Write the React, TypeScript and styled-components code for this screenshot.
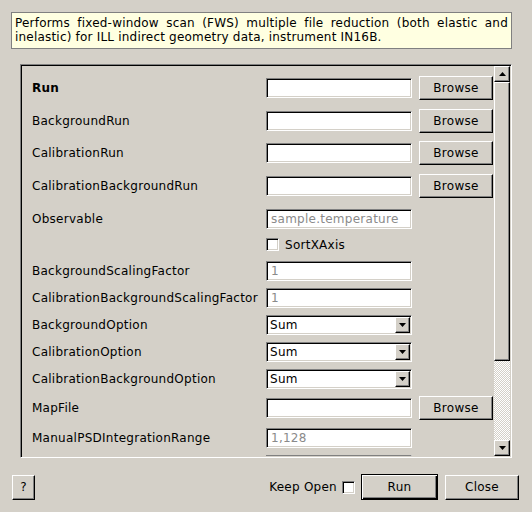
import React from 'react';
import styled, { createGlobalStyle, css } from 'styled-components';

const GlobalStyle = createGlobalStyle`
  html, body { margin: 0; padding: 0; background: #d4d0c8; }
  body {
    font-family: "DejaVu Sans", "Liberation Sans", sans-serif;
    font-size: 12px;
    color: #000;
  }
`;

const sunken = css`
  box-sizing: border-box;
  border: 1px solid;
  border-color: #808080 #ffffff #ffffff #808080;
  box-shadow: inset 1px 1px 0 #000, inset -1px -1px 0 #d4d0c8;
  background: #fff;
`;

const raised = css`
  box-sizing: border-box;
  border: 1px solid;
  border-color: #ffffff #000 #000 #ffffff;
  box-shadow: inset -1px -1px 0 #808080;
  background: #d4d0c8;
`;

const Window = styled.div`
  width: 532px;
  height: 512px;
  box-sizing: border-box;
  padding-top: 12px;
  display: flex;
  flex-direction: column;
  background: #d4d0c8;
  overflow: hidden;
`;

const Description = styled.div`
  margin-left: 11px;
  width: 501px;
  box-sizing: border-box;
  border: 1px solid #808080;
  background: #ffffe1;
  padding: 3px 3px 4px;
  line-height: 14px;
  text-align: justify;
  letter-spacing: 0.2px;
`;

const ScrollFrame = styled.div`
  margin: 15px 0 0 20px;
  width: 492px;
  height: 394px;
  box-sizing: border-box;
  border: 1px solid;
  border-color: #808080 #ffffff #ffffff #808080;
  box-shadow: inset 1px 1px 0 #000, inset -1px -1px 0 #d4d0c8;
  padding: 1px;
  display: flex;
`;

const Viewport = styled.div`
  flex: 1;
  overflow: hidden;
  padding: 9.5px 0 0 10px;
  display: flex;
  flex-direction: column;
  gap: 7px;
`;

const Row = styled.div<{ $h: number; $extra?: number }>`
  display: flex;
  align-items: center;
  gap: 7px;
  flex: none;
  height: ${(p) => p.$h}px;
  margin-top: ${(p) => p.$extra ?? 0}px;
`;

const Label = styled.div<{ $bold?: boolean }>`
  width: 227px;
  flex: none;
  white-space: nowrap;
  letter-spacing: 0.26px;
  font-weight: ${(p) => (p.$bold ? 'bold' : 'normal')};
`;

const TextField = styled.input`
  ${sunken};
  width: 146px;
  height: 20px;
  flex: none;
  margin: 0;
  padding: 0 3px 0 4px;
  font: inherit;
  letter-spacing: 0.26px;
  color: #000;
  outline: none;
  &::placeholder { color: #8a8a8a; opacity: 1; }
`;

const Combo = styled.div`
  ${sunken};
  width: 146px;
  height: 20px;
  flex: none;
  padding: 1px;
  display: flex;
  align-items: stretch;
`;

const ComboText = styled.div`
  flex: 1;
  padding-left: 2px;
  display: flex;
  align-items: center;
  letter-spacing: 0.26px;
`;

const SmallArrowButton = styled.div`
  ${raised};
  width: 15px;
  flex: none;
  display: flex;
  align-items: center;
  justify-content: center;
`;

const PushButton = styled.button<{ $w: number; $h: number }>`
  ${raised};
  width: ${(p) => p.$w}px;
  height: ${(p) => p.$h}px;
  flex: none;
  margin: 0;
  padding: 0;
  font: inherit;
  letter-spacing: 0.26px;
  color: #000;
`;

const DefaultButton = styled(PushButton)`
  border: 1px solid #000;
  box-shadow: inset 1px 1px 0 #fff, inset -1px -1px 0 #000, inset -2px -2px 0 #808080;
`;

const CheckBox = styled.span`
  ${sunken};
  display: inline-block;
  width: 13px;
  height: 13px;
  flex: none;
`;

const CheckCell = styled.label`
  margin-left: 234px;
  display: flex;
  align-items: center;
  gap: 6px;
  letter-spacing: 0.26px;
`;

const ScrollBar = styled.div`
  width: 16px;
  flex: none;
  display: flex;
  flex-direction: column;
`;

const ScrollArrow = styled.div`
  ${raised};
  height: 16px;
  flex: none;
  display: flex;
  align-items: center;
  justify-content: center;
`;

const Thumb = styled.div`
  ${raised};
  height: 279px;
  flex: none;
`;

const Trough = styled.div`
  flex: 1;
  background-color: #ebe9e4;
  background-image: conic-gradient(#ffffff 25%, #d4d0c8 0 50%, #ffffff 0 75%, #d4d0c8 0);
  background-size: 2px 2px;
`;

const BottomBar = styled.div`
  display: flex;
  align-items: center;
  height: 26px;
  margin-top: 16px;
  padding: 0 13px 0 12px;
`;

const Spacer = styled.div`
  flex: 1;
`;

const KeepOpen = styled.label`
  display: flex;
  align-items: center;
  gap: 5px;
  margin-right: 6px;
  letter-spacing: 0.26px;
`;

const Gap = styled.div<{ $w: number }>`
  width: ${(p) => p.$w}px;
  flex: none;
`;

const Arrow = ({ up }: { up?: boolean }) => (
  <svg width="7" height="4" viewBox="0 0 7 4">
    <polygon points={up ? '3.5,0 7,4 0,4' : '0,0 7,0 3.5,4'} fill="#000" />
  </svg>
);

type RowDef =
  | { kind: 'file'; label: string; bold?: boolean }
  | { kind: 'text'; label: string; placeholder?: string; extra?: number }
  | { kind: 'combo'; label: string; value: string }
  | { kind: 'check'; label: string };

const rows: RowDef[] = [
  { kind: 'file', label: 'Run', bold: true },
  { kind: 'file', label: 'BackgroundRun' },
  { kind: 'file', label: 'CalibrationRun' },
  { kind: 'file', label: 'CalibrationBackgroundRun' },
  { kind: 'text', label: 'Observable', placeholder: 'sample.temperature', extra: 3 },
  { kind: 'check', label: 'SortXAxis' },
  { kind: 'text', label: 'BackgroundScalingFactor', placeholder: '1' },
  { kind: 'text', label: 'CalibrationBackgroundScalingFactor', placeholder: '1' },
  { kind: 'combo', label: 'BackgroundOption', value: 'Sum' },
  { kind: 'combo', label: 'CalibrationOption', value: 'Sum' },
  { kind: 'combo', label: 'CalibrationBackgroundOption', value: 'Sum' },
  { kind: 'file', label: 'MapFile' },
  { kind: 'text', label: 'ManualPSDIntegrationRange', placeholder: '1,128' },
  { kind: 'text', label: '' },
];

const PropertyRow = ({ def }: { def: RowDef }) => {
  switch (def.kind) {
    case 'file':
      return (
        <Row $h={25.5}>
          <Label $bold={def.bold}>{def.label}</Label>
          <TextField readOnly />
          <PushButton $w={74} $h={24}>Browse</PushButton>
        </Row>
      );
    case 'text':
      return (
        <Row $h={20} $extra={def.extra}>
          <Label>{def.label}</Label>
          <TextField readOnly placeholder={def.placeholder} />
        </Row>
      );
    case 'combo':
      return (
        <Row $h={20}>
          <Label>{def.label}</Label>
          <Combo>
            <ComboText>{def.value}</ComboText>
            <SmallArrowButton>
              <Arrow />
            </SmallArrowButton>
          </Combo>
        </Row>
      );
    case 'check':
      return (
        <Row $h={18}>
          <CheckCell>
            <CheckBox />
            {def.label}
          </CheckCell>
        </Row>
      );
  }
};

export default function App() {
  return (
    <>
      <GlobalStyle />
      <Window>
        <Description>
          Performs fixed-window scan (FWS) multiple file reduction (both elastic and
          inelastic) for ILL indirect geometry data, instrument IN16B.
        </Description>
        <ScrollFrame>
          <Viewport>
            {rows.map((r, i) => (
              <PropertyRow key={i} def={r} />
            ))}
          </Viewport>
          <ScrollBar>
            <ScrollArrow>
              <Arrow up />
            </ScrollArrow>
            <Thumb />
            <Trough />
            <ScrollArrow>
              <Arrow />
            </ScrollArrow>
          </ScrollBar>
        </ScrollFrame>
        <BottomBar>
          <PushButton $w={23} $h={25}>?</PushButton>
          <Spacer />
          <KeepOpen>
            Keep Open
            <CheckBox />
          </KeepOpen>
          <DefaultButton $w={77} $h={26}>Run</DefaultButton>
          <Gap $w={7} />
          <PushButton $w={74} $h={25}>Close</PushButton>
        </BottomBar>
      </Window>
    </>
  );
}
